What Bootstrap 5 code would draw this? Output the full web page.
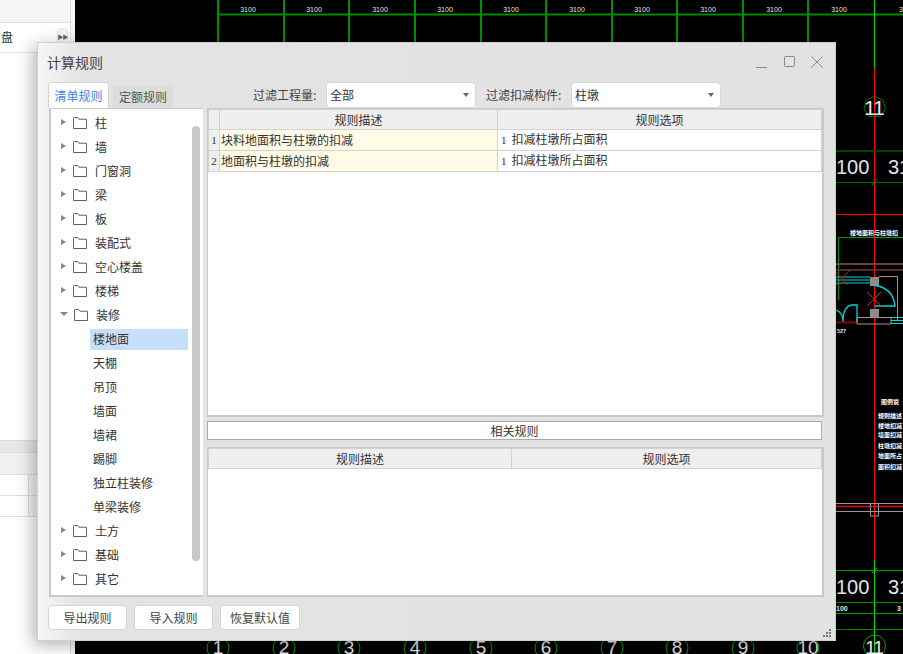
<!DOCTYPE html>
<html lang="zh-CN">
<head>
    <meta charset="UTF-8">
    <meta name="viewport" content="width=device-width, initial-scale=1">
    <title>计算规则</title>
    <link href="https://cdn.jsdelivr.net/npm/bootstrap@5.3.0/dist/css/bootstrap.min.css" rel="stylesheet">
    <style>
        html, body { height: 100%; }
        body {
            margin: 0; overflow: hidden; background: #000; color: #333;
            font-family: "Noto Sans CJK SC", "Liberation Sans", sans-serif; font-size: 12px; line-height: 1;
        }
        /* background app */
        .desk { width: 903px; height: 654px; }
        .side-pane { width: 75px; background: #fff; border-right: 4px solid #f5f5f5; }
        .side-inner { width: 71px; height: 100%; border-right: 1px solid #ddd; }
        .side-top { height: 23px; background: #f5f5f5; border-bottom: 1px solid #ddd; }
        .side-row { height: 30px; border-bottom: 1px solid #e4e4e4; font-size: 12px; padding-left: 1px; padding-bottom: 2px; }
        .side-more { width: 11px; height: 17px; margin-right: 2px; background: #f3f3f3; border: 1px solid #e4e4e4; border-radius: 3px; color: #666; font-size: 6px; letter-spacing: -1px; }
        .side-gap { height: 382px; }
        .side-band { height: 13px; margin-top: 5px; background: #e8e8e8; border-top: 1px solid #ddd; border-bottom: 1px solid #ddd; }
        .side-head { height: 22px; background: #f1f1f1; border-bottom: 1px solid #ddd; }
        .side-cell { height: 21px; border-bottom: 1px solid #ddd; }
        .side-cell span { display: block; width: 8px; height: 100%; margin-left: 28px; background: #f3f3f3; border-left: 1px solid #ddd; }
        .cad { width: 828px; height: 654px; display: block; }
        .cad text { font-family: "Liberation Sans", sans-serif; fill: #e6e6e6; }
        .cad .tiny { font-size: 7px; text-anchor: middle; }
        .cad .big { font-size: 20px; }
        .cad .note { font-family: "Noto Sans CJK SC", sans-serif; font-size: 6px; font-weight: bold; fill: #fff; }

        /* dialog */
        .calc-win {
            position: absolute; left: 37px; top: 42px; width: 799px; height: 599px;
            background: linear-gradient(90deg, #f6f6f6 0, #e3e3e3 45px, #e2e2e2 100%);
            border: 1px solid #cfcfcf; box-shadow: -4px 4px 16px rgba(0, 0, 0, .3);
            padding: 0 12px 0 10px;
        }
        .win-title { height: 39px; font-size: 14px; color: #444; padding-bottom: 2px; }
        .win-name { margin-left: -1px; }
        .win-btn { display: block; margin-left: 13px; }
        .tab-bar { height: 26px; }
        .rule-tab { height: 22px; width: 60px; margin-right: 4px; background: #dcdcdc; border-radius: 3px 3px 0 0; color: #555; }
        .rule-tab.on { height: 26px; width: 61px; background: #fff; color: #3b86e6; border: 1px solid #d4d4d4; border-bottom: 0; }
        .filter-a { margin-left: 76px; width: 73px; color: #444; }
        .filter-b { margin-left: 10px; width: 85px; color: #444; }
        .form-select.calc-select {
            width: 150px; height: 26px; min-height: 0; padding: 0 0 0 3px; font-size: 12px; color: #333; line-height: 24px;
            border: 1px solid #d8d8d8; border-radius: 4px;
            background-image: url("data:image/svg+xml,%3csvg xmlns='http://www.w3.org/2000/svg' viewBox='0 0 6 4'%3e%3cpath fill='%23666' d='M0 0h6L3 4z'/%3e%3c/svg%3e");
            background-size: 6px 4px; background-position: right 6px center;
        }
        .body-area { height: 489px; }
        .tree-box { width: 154px; margin-left: 1px; margin-right: 4px; background: #fff; border: 2px solid #c9c9c9; border-right: 0; border-top-width: 1px; padding-top: 2px; }
        .tree-list { width: 138px; }
        .tree-row { height: 24px; color: #333; }
        .tree-arrow { width: 0; height: 0; margin-left: 10px; margin-right: 7px; border-left: 5px solid #888; border-top: 3.5px solid transparent; border-bottom: 3.5px solid transparent; position: relative; top: -1px; }
        .tree-arrow.open { margin-left: 9px; margin-right: 6px; border-top: 4.500px solid #888; border-left: 4px solid transparent; border-right: 4px solid transparent; border-bottom: 0; }
        .tree-folder { width: 14px; height: 12px; margin-right: 8px; display: block; }
        .tree-leaf { height: 24px; padding: 2px 0 1px 39px; }
        .tree-leaf span { display: block; height: 21px; line-height: 20px; padding-left: 3px; width: 98px; }
        .tree-leaf.sel span { background: #c8dffa; }
        .tree-scroll { width: 8px; height: 435px; margin: 15px 0 0 3px; background: #c8c8c8; border-radius: 4px; }
        .rule-col { width: 617px; }
        .grid-box { background: #fff; border: solid #c9c9c9; border-width: 1px 2px 2px 1px; }
        .grid-top { height: 309px; }
        .grid-low { height: 150px; }
        .rel-head { height: 19px; width: 615px; margin: 4px 0 7px; background: #fff; border: 1px solid #aaa; }
        .table.calc-grid { table-layout: fixed; width: 614px; margin: 0; font-size: 12px; color: #333; border-color: #d2d2d2; --bs-table-bg: transparent; }
        .calc-grid th, .calc-grid td { height: 20px; padding: 0 1px 1px; line-height: 17px; font-weight: 400; vertical-align: middle; white-space: nowrap; }
        .calc-grid thead th { height: 20px; padding-bottom: 0; background: #efefef; text-align: center; border-bottom-color: #c9c9c9; border-top: 0; }
        .calc-grid .row-no { background: #efefef; text-align: center; padding: 0; font-size: 11px; font-family: "Liberation Serif", serif; }
        .calc-grid .rule-name { background: #fffbe6; }
        .calc-grid .rule-opt { padding-left: 3px; }
        .opt-no { font-family: "Liberation Serif", serif; font-size: 11px; margin-right: 5px; }
        .win-foot { padding-top: 8px; }
        .btn.calc-btn { height: 25px; width: 79px; padding: 0; margin-right: 7px; font-size: 12px; line-height: 23px; color: #444; background: #fff; border: 1px solid #d4d4d4; border-radius: 4px; }
        .btn.calc-btn.wide { width: 80px; }
        .grip { position: absolute; right: 3px; bottom: 2px; display: block; }
    </style>
</head>
<body>
    <svg width="0" height="0" class="d-block">
        <symbol id="folder" viewBox="0 0 14 12">
            <path d="M.5 11.500V1.200Q.5.5 1.200.5H4.600L6 2.200H13.500V11.500Z" fill="none" stroke="#5a6072" stroke-width="1"/>
        </symbol>
    </svg>

    <div class="desk d-flex">
        <!-- programa atras -->
        <div class="side-pane flex-shrink-0">
            <div class="side-inner d-flex flex-column">
                <div class="side-top"></div>
                <div class="side-row d-flex align-items-center justify-content-between">
                    <span>盘</span>
                    <span class="side-more d-flex align-items-center justify-content-center">▶▶</span>
                </div>
                <div class="side-gap"></div>
                <div class="side-band"></div>
                <div class="side-head"></div>
                <div class="side-cell"><span></span></div>
                <div class="side-cell"><span></span></div>
            </div>
        </div>

        <!-- desenho cad -->
        <svg class="cad" viewBox="75 0 828 654" fill="none">
            <g stroke="#00c000" stroke-width="1.500">
                <path d="M218 0V42M284 0V42M349 0V42M415 0V42M481 0V42M546 0V42M612 0V42M677 0V42M743 0V42M808 0V42"/>
            </g>
            <path d="M218 14.500H903" stroke="#008a00" stroke-width="2"/>
            <path d="M874.500 0V68M874.500 560V654" stroke="#00e000" stroke-width="1"/>
            <path d="M874.500 68V560" stroke="#f00" stroke-width="1"/>
            <g>
                <text class="tiny" x="248" y="12">3100</text><text class="tiny" x="314" y="12">3100</text>
                <text class="tiny" x="380" y="12">3100</text><text class="tiny" x="445" y="12">3100</text>
                <text class="tiny" x="511" y="12">3100</text><text class="tiny" x="577" y="12">3100</text>
                <text class="tiny" x="642" y="12">3100</text><text class="tiny" x="708" y="12">3100</text>
                <text class="tiny" x="774" y="12">3100</text><text class="tiny" x="839" y="12">3100</text>
                <text class="tiny" x="901" y="12">3</text>
            </g>
            <path d="M874.500 96L883 100.500L885.500 109L880.500 116.500L869 116.500L864 109L866 100.500Z" stroke="#007a00"/>
            <text x="864" y="115" font-size="21" style="letter-spacing:-1px">11</text>
            <path d="M836 151H903" stroke="#005a00" stroke-width="1.500"/>
            <text class="big" x="836" y="174">100</text><text class="big" x="888" y="174">31</text>
            <path d="M836 182.500H903" stroke="#006a00"/>
            <path d="M872 185L877 179" stroke="#00a000"/>
            <path d="M836 214.500H903" stroke="#f00"/>
            <text class="note" x="850" y="235">楼地面积与柱墩扣</text>
            <path d="M838.500 300V237.500H903" stroke="#00a000"/>
            <path d="M836 264H903" stroke="#8a5a4a" stroke-width="1.500"/>
            <path d="M836 270H903" stroke="#6a4034" stroke-width="1.500"/>
            <path d="M836 277H870M836 280H870M836 283H870" stroke="#00d8d8"/>
            <path d="M834 270L848 285M850 270L836 285" stroke="#e01010"/>
            <rect x="870" y="277" width="9" height="9" fill="#8c8c8c"/>
            <path d="M879 276.500H897.500V320" stroke="#d08070"/>
            <path d="M872 285Q893 287 895 306H875" stroke="#00d8d8" stroke-width="1.300"/>
            <path d="M867 292L881 306M881 292L867 306" stroke="#e01010"/>
            <rect x="870" y="309" width="9" height="9" fill="#8c8c8c"/>
            <path d="M836 310Q843 312 843 322M843 322Q843 306 852 305H857V322" stroke="#00d8d8" stroke-width="1.300"/>
            <path d="M836 322.500H857" stroke="#8a0000" stroke-width="2"/>
            <path d="M857 317.500H891V324H857Z" stroke="#999"/>
            <path d="M891 317.500H903M891 320.500H903M891 323.500H903" stroke="#00d8d8"/>
            <text x="837" y="333" font-size="5.500" font-weight="bold">527</text>
            <g>
                <text class="note" x="881" y="404">图例说</text>
                <text class="note" x="878" y="418">规则描述</text>
                <text class="note" x="878" y="428">楼地扣减</text>
                <text class="note" x="878" y="437">墙面扣减</text>
                <text class="note" x="878" y="448">柱墩扣减</text>
                <text class="note" x="878" y="458">地面所占</text>
                <text class="note" x="878" y="469">面积扣减</text>
            </g>
            <path d="M836 503.500H903M836 511.500H903" stroke="#999"/>
            <path d="M836 506.500H903" stroke="#e01010" stroke-width="1.300"/>
            <path d="M870.500 504V516H878.500V504" stroke="#999"/>
            <path d="M836 570.500H903M836 613.500H903" stroke="#00a000"/>
            <path d="M836 602.500H903M836 629.500H903" stroke="#008a00"/>
            <path d="M872 573L877 568" stroke="#00a000"/>
            <text class="big" x="836" y="594">100</text><text class="big" x="888" y="594">31</text>
            <text x="836" y="611" font-size="7" font-weight="bold">100</text>
            <text x="897" y="611" font-size="7" font-weight="bold">3</text>
            <g stroke="#00a000">
                <circle cx="218" cy="648" r="11"/><circle cx="284" cy="648" r="11"/>
                <circle cx="349" cy="648" r="11"/><circle cx="415" cy="648" r="11"/>
                <circle cx="481" cy="648" r="11"/><circle cx="546" cy="648" r="11"/>
                <circle cx="612" cy="648" r="11"/><circle cx="677" cy="648" r="11"/>
                <circle cx="743" cy="648" r="11"/><circle cx="808" cy="648" r="11"/>
                <circle cx="874.500" cy="646" r="11"/>
            </g>
            <g font-size="19" text-anchor="middle">
                <text x="218" y="654">1</text><text x="284" y="654">2</text><text x="349" y="654">3</text>
                <text x="415" y="654">4</text><text x="481" y="654">5</text><text x="546" y="654">6</text>
                <text x="612" y="654">7</text><text x="677" y="654">8</text><text x="743" y="654">9</text>
                <text x="808" y="654">10</text><text x="874" y="654" style="letter-spacing:-1px">11</text>
            </g>
        </svg>
    </div>

    <!-- janela de regras -->
    <div class="calc-win d-flex flex-column">
        <div class="win-title d-flex align-items-center justify-content-between flex-shrink-0">
            <span class="win-name">计算规则</span>
            <div class="d-flex align-items-center">
                <svg class="win-btn" width="12" height="12" viewBox="0 0 12 12" fill="none" stroke="#888"><path d="M0 11.500H11"/></svg>
                <svg class="win-btn" width="12" height="12" viewBox="0 0 12 12" fill="none" stroke="#888" style="margin-left: 16px"><rect x=".5" y=".5" width="10" height="10" rx="1"/></svg>
                <svg class="win-btn" width="12" height="12" viewBox="0 0 12 12" fill="none" stroke="#888" style="margin-left: 15px"><path d="M.5.5L11.500 11.500M11.500.5L.5 11.500"/></svg>
            </div>
        </div>

        <div class="tab-bar d-flex align-items-end flex-shrink-0">
            <div class="rule-tab on d-flex align-items-center justify-content-center">清单规则</div>
            <div class="rule-tab d-flex align-items-center justify-content-center">定额规则</div>
            <div class="d-flex align-items-center align-self-stretch">
                <span class="filter-a">过滤工程量:</span>
                <select class="form-select calc-select"><option>全部</option></select>
                <span class="filter-b">过滤扣减构件:</span>
                <select class="form-select calc-select"><option>柱墩</option></select>
            </div>
        </div>

        <div class="body-area d-flex flex-shrink-0">
            <div class="tree-box d-flex flex-shrink-0">
                <div class="tree-list flex-shrink-0">
                    <div class="tree-row d-flex align-items-center"><i class="tree-arrow"></i><svg class="tree-folder"><use href="#folder"/></svg><span>柱</span></div>
                    <div class="tree-row d-flex align-items-center"><i class="tree-arrow"></i><svg class="tree-folder"><use href="#folder"/></svg><span>墙</span></div>
                    <div class="tree-row d-flex align-items-center"><i class="tree-arrow"></i><svg class="tree-folder"><use href="#folder"/></svg><span>门窗洞</span></div>
                    <div class="tree-row d-flex align-items-center"><i class="tree-arrow"></i><svg class="tree-folder"><use href="#folder"/></svg><span>梁</span></div>
                    <div class="tree-row d-flex align-items-center"><i class="tree-arrow"></i><svg class="tree-folder"><use href="#folder"/></svg><span>板</span></div>
                    <div class="tree-row d-flex align-items-center"><i class="tree-arrow"></i><svg class="tree-folder"><use href="#folder"/></svg><span>装配式</span></div>
                    <div class="tree-row d-flex align-items-center"><i class="tree-arrow"></i><svg class="tree-folder"><use href="#folder"/></svg><span>空心楼盖</span></div>
                    <div class="tree-row d-flex align-items-center"><i class="tree-arrow"></i><svg class="tree-folder"><use href="#folder"/></svg><span>楼梯</span></div>
                    <div class="tree-row d-flex align-items-center"><i class="tree-arrow open"></i><svg class="tree-folder"><use href="#folder"/></svg><span>装修</span></div>
                    <div class="tree-leaf sel"><span>楼地面</span></div>
                    <div class="tree-leaf"><span>天棚</span></div>
                    <div class="tree-leaf"><span>吊顶</span></div>
                    <div class="tree-leaf"><span>墙面</span></div>
                    <div class="tree-leaf"><span>墙裙</span></div>
                    <div class="tree-leaf"><span>踢脚</span></div>
                    <div class="tree-leaf"><span>独立柱装修</span></div>
                    <div class="tree-leaf"><span>单梁装修</span></div>
                    <div class="tree-row d-flex align-items-center"><i class="tree-arrow"></i><svg class="tree-folder"><use href="#folder"/></svg><span>土方</span></div>
                    <div class="tree-row d-flex align-items-center"><i class="tree-arrow"></i><svg class="tree-folder"><use href="#folder"/></svg><span>基础</span></div>
                    <div class="tree-row d-flex align-items-center"><i class="tree-arrow"></i><svg class="tree-folder"><use href="#folder"/></svg><span>其它</span></div>
                </div>
                <div class="tree-scroll flex-shrink-0"></div>
            </div>

            <div class="rule-col d-flex flex-column flex-shrink-0">
                <div class="grid-box grid-top">
                    <table class="table table-bordered calc-grid">
                        <colgroup><col style="width: 11px"><col style="width: 278px"><col></colgroup>
                        <thead><tr><th></th><th>规则描述</th><th>规则选项</th></tr></thead>
                        <tbody>
                            <tr><td class="row-no">1</td><td class="rule-name">块料地面积与柱墩的扣减</td><td class="rule-opt"><span class="opt-no">1</span>扣减柱墩所占面积</td></tr>
                            <tr><td class="row-no">2</td><td class="rule-name">地面积与柱墩的扣减</td><td class="rule-opt"><span class="opt-no">1</span>扣减柱墩所占面积</td></tr>
                        </tbody>
                    </table>
                </div>
                <div class="rel-head d-flex align-items-center justify-content-center flex-shrink-0">相关规则</div>
                <div class="grid-box grid-low">
                    <table class="table table-bordered calc-grid">
                        <colgroup><col style="width: 303px"><col></colgroup>
                        <thead><tr><th>规则描述</th><th>规则选项</th></tr></thead>
                    </table>
                </div>
            </div>
        </div>

        <div class="win-foot d-flex">
            <button type="button" class="btn calc-btn">导出规则</button>
            <button type="button" class="btn calc-btn">导入规则</button>
            <button type="button" class="btn calc-btn wide">恢复默认值</button>
        </div>

        <svg class="grip" width="9" height="9" viewBox="0 0 9 9" fill="#777">
            <rect x="6" y="0" width="2" height="2"/><rect x="3" y="3" width="2" height="2"/><rect x="6" y="3" width="2" height="2"/>
            <rect x="0" y="6" width="2" height="2"/><rect x="3" y="6" width="2" height="2"/><rect x="6" y="6" width="2" height="2"/>
        </svg>
    </div>

    <script src="https://cdn.jsdelivr.net/npm/bootstrap@5.3.0/dist/js/bootstrap.bundle.min.js"></script>
</body>
</html>
